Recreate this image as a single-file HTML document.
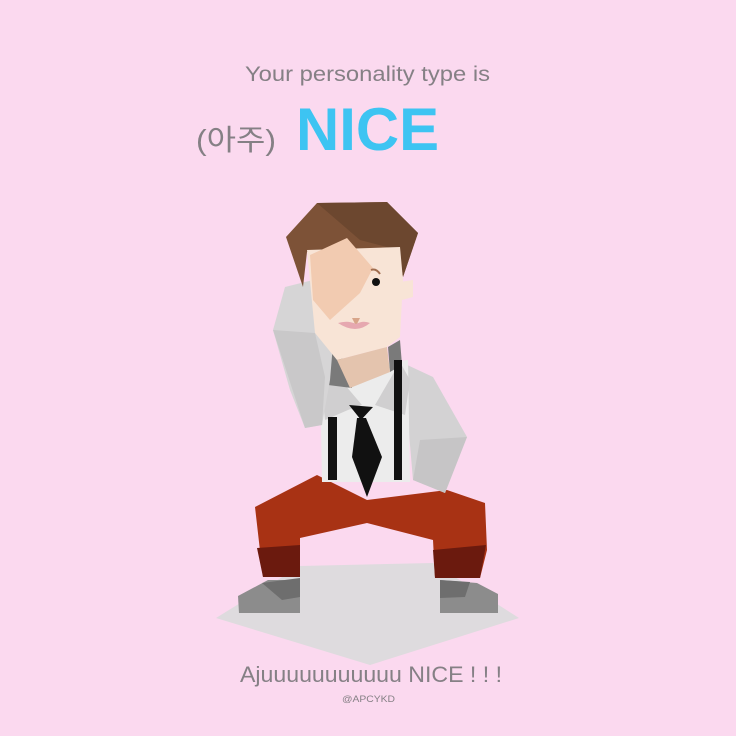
<!DOCTYPE html>
<html><head><meta charset="utf-8"><style>
html,body{margin:0;padding:0;background:#fbd9ef;}
svg{display:block}
text{font-family:"Liberation Sans","Noto Sans CJK KR",sans-serif;}
</style></head><body>
<svg width="736" height="736" viewBox="0 0 736 736" xmlns="http://www.w3.org/2000/svg">
<rect width="736" height="736" fill="#fbd9ef"/>
<text x="245" y="81" font-size="21" fill="#858085" textLength="245" lengthAdjust="spacingAndGlyphs">Your personality type is</text>
<text x="196" y="150" font-size="29" fill="#858085" textLength="80" lengthAdjust="spacingAndGlyphs">(아주)</text>
<text x="296" y="150" font-size="60" font-weight="bold" fill="#3dc4f2" textLength="143" lengthAdjust="spacingAndGlyphs">NICE</text>
<!-- shadow -->
<polygon points="216,618 300,566 433,563 519,618 370,665" fill="#dedbde"/>
<!-- shoes -->
<polygon points="238,596 268,580 300,580 300,613 239,613" fill="#8c8c8c"/>
<polygon points="262,583 300,578 300,597 282,600" fill="#6e6e6e"/>
<polygon points="440,580 477,583 498,594 498,613 440,613" fill="#8c8c8c"/>
<polygon points="440,580 470,582 465,597 440,598" fill="#6e6e6e"/>
<!-- pants -->
<polygon points="255,507 317,475 367,500 447,490 485,503 487,550 480,578 435,578 433,540 367,523 300,538 300,577 263,577" fill="#a83214"/>
<polygon points="257,548 300,545 300,577 263,577" fill="#6b1a0e"/>
<polygon points="433,550 486,545 480,578 435,578" fill="#6b1a0e"/>
<!-- right arm -->
<polygon points="403,363 433,377 467,437 445,493 413,480" fill="#d3d2d3"/>
<polygon points="420,440 467,437 445,493 413,480" fill="#c6c5c6"/>
<!-- shirt -->
<polygon points="320,370 408,360 410,482 322,482" fill="#ececec"/>
<polygon points="320,372 345,385 362,405 348,410 325,420" fill="#d0cfd0"/>
<polygon points="375,405 400,362 410,380 405,415" fill="#d0cfd0"/>
<polygon points="325,355 340,350 352,388 328,385" fill="#7a7a7a"/>
<polygon points="388,347 400,340 402,365 390,372" fill="#7a7a7a"/>
<!-- suspenders -->
<rect x="328" y="417" width="9" height="63" fill="#111"/>
<rect x="394" y="360" width="8" height="120" fill="#111"/>
<!-- tie -->
<polygon points="349,405 373,407 361,420" fill="#111"/>
<polygon points="357,418 366,418 382,457 367,497 352,457" fill="#111"/>
<!-- raised arm -->
<polygon points="273,330 285,287 313,280 335,320 330,380 322,425 305,428 290,390" fill="#d6d5d6"/>
<polygon points="273,330 315,333 325,377 322,425 305,428" fill="#c9c8c9"/>
<!-- hair -->
<polygon points="286,237 317,203 387,202 418,233 403,277 400,250 307,252 303,287" fill="#7d5237"/>
<polygon points="317,203 387,202 418,233 403,277 398,250 360,240" fill="#6c472f"/>
<!-- face -->
<polygon points="307,250 400,247 403,280 400,337 387,347 337,360 315,333" fill="#f8e4d6"/>
<polygon points="337,360 387,347 390,372 350,388" fill="#e4c4ae"/>
<polygon points="400,282 413,280 413,297 402,300" fill="#f8e4d6"/>
<!-- hand -->
<polygon points="310,255 347,238 373,268 360,293 330,320 313,300" fill="#f2cbb1"/>
<!-- eye, brow, nose, mouth -->
<circle cx="376" cy="282" r="4" fill="#111"/>
<path d="M371 270 Q376 268 380 274" stroke="#a06d4f" stroke-width="2" fill="none"/>
<polygon points="352,318 360,318 356,326" fill="#d8a58a"/>
<path d="M338 323 Q348 320 356 324 Q363 320 370 323 Q356 335 338 323Z" fill="#e6a8b0"/>
<!-- bottom text -->
<text x="240" y="682" font-size="22" fill="#858085" textLength="262" lengthAdjust="spacingAndGlyphs">Ajuuuuuuuuuuu NICE ! ! !</text>
<text x="342" y="702" font-size="9" fill="#858085" textLength="53" lengthAdjust="spacingAndGlyphs">@APCYKD</text>
</svg>
</body></html>
